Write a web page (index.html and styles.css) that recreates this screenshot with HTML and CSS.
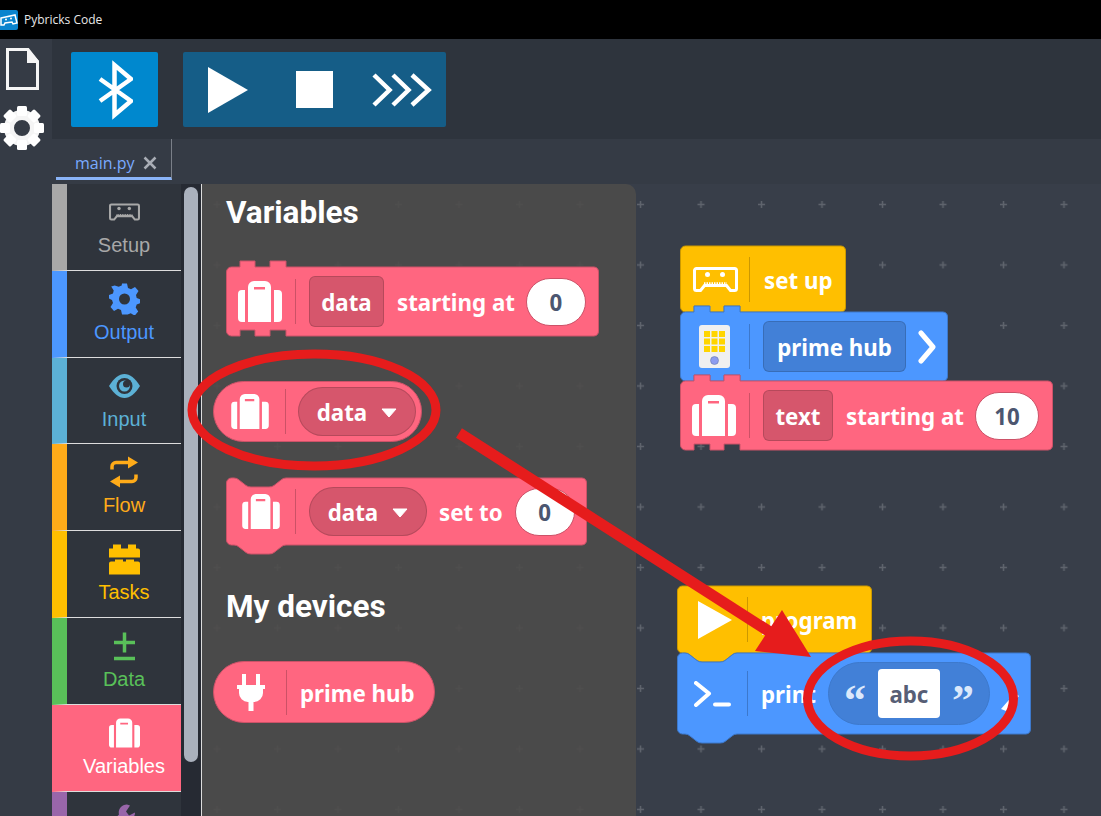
FILE: index.html
```html
<!DOCTYPE html>
<html lang="en">
<head>
    <meta charset="UTF-8">
    <title>Pybricks Code</title>
    <link rel="stylesheet" href="styles.css">
</head>
<body>
    <!-- shared icons -->
    <svg class="defs" width="0" height="0">
        <symbol id="i-case" viewBox="0 0 44 41">
            <path fill-rule="evenodd" d="M10 6a6 6 0 0 1 6-6h11a6 6 0 0 1 6 6v35H10zM16 6v2.500h11V6z"/>
            <path d="M7 9v32H4a4 4 0 0 1-4-4V13a4 4 0 0 1 4-4zM36 9h4a4 4 0 0 1 4 4v24a4 4 0 0 1-4 4h-4z"/>
        </symbol>
        <symbol id="i-setup" viewBox="0 0 45 25">
            <path d="M3.500 1.500h38a2 2 0 0 1 2 2v18a2 2 0 0 1-2 2h-4l-4-5H11.500l-4 5h-4a2 2 0 0 1-2-2v-18a2 2 0 0 1 2-2z" fill="none" stroke="currentColor" stroke-width="3"/>
            <circle cx="14.500" cy="7.500" r="2.500"/>
            <circle cx="29.500" cy="7.500" r="2.500"/>
            <path d="M11 16.500h23" stroke="currentColor" stroke-width="2.500" stroke-dasharray="1.500 1"/>
        </symbol>
        <symbol id="i-gear6" viewBox="0 0 31 31">
            <path d="M13 0h5l1 4.500 3 1.300 4-2.400 3.500 4-2.500 4 .7 3.100 4 1.500v3.500l-4 1.500-1 3.100 2.500 4-3.500 4-4-2.400-3 1.300L18 31h-5l-1-4.500-3-1.300-4 2.400-3.500-4 2.500-4-1-3.100-3-1.500V11.500l4-1.500.7-3.100-2.500-4 3.500-1 4 1.400 3-1.300z"/>
            <circle cx="15.500" cy="15.500" r="5.500" fill="#2f343c"/>
        </symbol>
        <symbol id="i-plug" viewBox="0 0 28 37">
            <path d="M5 0h4v11H5zM19 0h4v11h-4zM0 11h28v4h-2v4a9 9 0 0 1-9 9h-.500v9h-5v-9H11a9 9 0 0 1-9-9v-4H0z"/>
        </symbol>
    </svg>

    <div class="titlebar">
        <span class="app-icon">
            <svg width="18" height="20" viewBox="0 0 18 20"><path d="M1 8l14-3 2 8-4 1-1-2-7 1-1 2-3 0z" fill="none" stroke="#fff" stroke-width="1.500"/><circle cx="6" cy="9.500" r="1" fill="#fff"/><circle cx="11" cy="8.500" r="1" fill="#fff"/></svg>
        </span>
        <span class="app-title">Pybricks Code</span>
    </div>

    <div class="app">
        <div class="rail">
            <svg class="rail-doc" width="33" height="42" viewBox="0 0 33 42">
                <path d="M1.500 1.500H22L31.500 13.500V40.500H1.500z" fill="none" stroke="#f5f5f5" stroke-width="3"/>
                <path d="M21 0L33 13v2H21z" fill="#f5f5f5"/>
            </svg>
            <svg class="rail-gear" width="44" height="44" viewBox="-22 -22 44 44" fill="#f5f5f5">
                <circle r="13" fill="none" stroke="#f5f5f5" stroke-width="10"/>
                <rect x="-5" y="-22" width="10" height="10" rx="1.500"/>
                <rect x="-5" y="-22" width="10" height="10" rx="1.500" transform="rotate(45)"/>
                <rect x="-5" y="-22" width="10" height="10" rx="1.500" transform="rotate(90)"/>
                <rect x="-5" y="-22" width="10" height="10" rx="1.500" transform="rotate(135)"/>
                <rect x="-5" y="-22" width="10" height="10" rx="1.500" transform="rotate(180)"/>
                <rect x="-5" y="-22" width="10" height="10" rx="1.500" transform="rotate(225)"/>
                <rect x="-5" y="-22" width="10" height="10" rx="1.500" transform="rotate(270)"/>
                <rect x="-5" y="-22" width="10" height="10" rx="1.500" transform="rotate(315)"/>
            </svg>
        </div>

        <div class="content">
            <div class="toolbar">
                <div class="btn-bluetooth">
                    <svg width="36" height="60" viewBox="0 0 36 60"><path d="M3 19L34 41 17.500 55V5L34 19 3 41" fill="none" stroke="#fff" stroke-width="4.500"/></svg>
                </div>
                <div class="btn-group">
                    <svg width="40" height="46" viewBox="0 0 40 46"><path d="M0 0L40 23 0 46z" fill="#fff"/></svg>
                    <div class="stop"></div>
                    <svg width="60" height="34" viewBox="0 0 60 34"><path d="M2 2L17.500 17 2 32M21 2L36.500 17 21 32M40 2L56.500 17 40 32" fill="none" stroke="#fff" stroke-width="4.500"/></svg>
                </div>
            </div>

            <div class="tabs">
                <div class="tab">
                    <span>main.py</span>
                    <svg width="14" height="14" viewBox="0 0 14 14"><path d="M1.500 1.500l11 11M12.500 1.500l-11 11" stroke="#a9adb5" stroke-width="2.500"/></svg>
                </div>
            </div>

            <div class="editor">
                <div class="toolbox">
                    <div class="cat cat-setup">
                        <svg class="cat-icon" width="31" height="18"><use href="#i-setup"/></svg>
                        <span>Setup</span>
                    </div>
                    <div class="cat cat-output">
                        <svg class="cat-icon" width="31" height="31"><use href="#i-gear6"/></svg>
                        <span>Output</span>
                    </div>
                    <div class="cat cat-input">
                        <svg class="cat-icon" width="31" height="24" viewBox="0 0 31 24">
                            <path d="M0 12C5 4 10 0 15.500 0S26 4 31 12c-5 8-10 12-15.500 12S5 20 0 12z"/>
                            <circle cx="15.500" cy="12" r="8" fill="#2f343c"/>
                            <circle cx="15.500" cy="12" r="5.500"/>
                            <circle cx="17.500" cy="10" r="3.500" fill="#2f343c"/>
                        </svg>
                        <span>Input</span>
                    </div>
                    <div class="cat cat-flow">
                        <svg class="cat-icon" width="28" height="31" viewBox="0 0 28 31">
                            <path d="M2 13V10a4 4 0 0 1 4-4h14M26 18v3a4 4 0 0 1-4 4H8" fill="none" stroke="currentColor" stroke-width="3.500"/>
                            <path d="M18 0l10 6-10 6zM10 19L0 25l10 6z"/>
                        </svg>
                        <span>Flow</span>
                    </div>
                    <div class="cat cat-tasks">
                        <svg class="cat-icon" width="31" height="31" viewBox="0 0 31 31">
                            <path d="M0 5h4V1h8v4h7V1h8v4h2a2 2 0 0 1 2 2v7H0zM0 20a2 2 0 0 1 2-2h4v-2h8v2h3v-2h8v2h4a2 2 0 0 1 2 2v11H0z"/>
                        </svg>
                        <span>Tasks</span>
                    </div>
                    <div class="cat cat-data">
                        <svg class="cat-icon" width="21" height="29" viewBox="0 0 21 29">
                            <path d="M0 11h21M10.500 1v20M0 27h21" stroke="currentColor" stroke-width="3.500"/>
                        </svg>
                        <span>Data</span>
                    </div>
                    <div class="cat cat-vars">
                        <svg class="cat-icon" width="31" height="30"><use href="#i-case"/></svg>
                        <span>Variables</span>
                    </div>
                    <div class="cat cat-funcs">
                        <svg class="cat-icon" width="22" height="31" viewBox="0 0 22 31">
                            <path d="M14 0a8 8 0 0 0-8 10l-6 6 6 8 7-8a8 8 0 0 0 9-8l-6 3-3-4 4-6z"/>
                        </svg>
                    </div>
                </div>

                <div class="scrollbar"><div class="thumb"></div></div>

                <div class="workspace">
                    <svg class="grid" width="100%" height="100%">
                        <defs>
                            <pattern id="plus" x="10.500" y="17" width="60.500" height="60.500" patternUnits="userSpaceOnUse">
                                <path d="M1 3.500h7M4.500 0v7" stroke="#5f646d" stroke-width="1.500"/>
                            </pattern>
                        </defs>
                        <rect width="100%" height="100%" fill="url(#plus)"/>
                    </svg>

                    <div class="flyout">
                        <h2 class="fly-title">Variables</h2>

                        <div class="block red var-init">
                            <svg class="shape" width="373" height="69"><path d="M.5 5a5 5 0 0 1 5-5H14V-6H29V0H44V-6H60V0H368a5 5 0 0 1 4.500 5V64a5 5 0 0 1-4.500 5H60V63H44V69H29V63H14V69H5.500a5 5 0 0 1-5-5z"/></svg>
                            <svg class="icon" width="44" height="41"><use href="#i-case"/></svg>
                            <div class="sep"></div>
                            <div class="field field-square w-data">data</div>
                            <span class="label">starting at</span>
                            <div class="num">0</div>
                        </div>

                        <div class="block red pill var-get">
                            <svg class="icon" width="38" height="35"><use href="#i-case"/></svg>
                            <div class="sep"></div>
                            <div class="field field-pill">data<svg class="tri" width="16" height="10" viewBox="0 0 16 10"><path d="M1 1h14L8 9z" fill="#fff" stroke="#fff" stroke-linejoin="round"/></svg></div>
                        </div>

                        <div class="block red var-set">
                            <svg class="shape" width="361" height="67"><path d="M.5 5a5 5 0 0 1 5-5H8Q11 0 13 2L20 7.500Q22 9 25 9H43Q46 9 48 7.500L55 2Q57 0 60 0H356a5 5 0 0 1 4.500 5V62a5 5 0 0 1-4.500 5H60Q57 67 55 69L48 74.500Q46 76 43 76H25Q22 76 20 74.500L13 69Q11 67 8 67H5.500a5 5 0 0 1-5-5z"/></svg>
                            <svg class="icon" width="38" height="35"><use href="#i-case"/></svg>
                            <div class="sep"></div>
                            <div class="field field-pill">data<svg class="tri" width="16" height="10" viewBox="0 0 16 10"><path d="M1 1h14L8 9z" fill="#fff" stroke="#fff" stroke-linejoin="round"/></svg></div>
                            <span class="label">set to</span>
                            <div class="num">0</div>
                        </div>

                        <h2 class="fly-title devices">My devices</h2>

                        <div class="block red pill dev-hub">
                            <svg class="icon" width="28" height="37"><use href="#i-plug"/></svg>
                            <div class="sep"></div>
                            <span class="label">prime hub</span>
                        </div>
                    </div>

                    <!-- blocos soltos no canvas -->
                    <div class="stack stack-setup">
                        <div class="block yellow b-setup">
                            <svg class="shape" width="166" height="66"><path d="M.5 5a5 5 0 0 1 5-5H161a5 5 0 0 1 4.500 5V61a5 5 0 0 1-4.500 5H60V60H44V66H29V60H14V66H5.500a5 5 0 0 1-5-5z"/></svg>
                            <svg class="icon" width="45" height="25"><use href="#i-setup"/></svg>
                            <div class="sep"></div>
                            <span class="label">set up</span>
                        </div>
                        <div class="block blue b-hub">
                            <svg class="shape" width="268" height="69"><path d="M.5 5a5 5 0 0 1 5-5H14V-6H30V0H44V-6H60V0H263a5 5 0 0 1 4.500 5V64a5 5 0 0 1-4.500 5H60V63H44V69H30V63H14V69H5.500a5 5 0 0 1-5-5z"/></svg>
                            <svg class="icon" width="31" height="43" viewBox="0 0 31 43">
                                <rect width="31" height="43" rx="3" fill="#f0f0f0"/>
                                <path d="M5 6h6v6H5zM12.500 6h6v6h-6zM20 6h6v6h-6zM5 13.500h6v6H5zM12.500 13.500h6v6h-6zM20 13.500h6v6h-6zM5 21h6v6H5zM12.500 21h6v6h-6zM20 21h6v6h-6z" fill="#ffd500"/>
                                <circle cx="15.500" cy="35.500" r="4" fill="#8c9cf0" stroke="#5f6fa0" stroke-width=".5"/>
                            </svg>
                            <div class="sep"></div>
                            <div class="field field-square w-hub">prime hub</div>
                            <svg class="chevron" width="18" height="34" viewBox="0 0 18 34"><path d="M3 3l12 14L3 31" fill="none" stroke="#fff" stroke-width="5" stroke-linecap="round" stroke-linejoin="round"/></svg>
                        </div>
                        <div class="block red b-text">
                            <svg class="shape" width="373" height="69"><path d="M.5 5a5 5 0 0 1 5-5H14V-6H30V0H44V-6H60V0H368a5 5 0 0 1 4.500 5V64a5 5 0 0 1-4.500 5H60V63H44V69H30V63H14V69H5.500a5 5 0 0 1-5-5z"/></svg>
                            <svg class="icon" width="44" height="41"><use href="#i-case"/></svg>
                            <div class="sep"></div>
                            <div class="field field-square w-text">text</div>
                            <span class="label">starting at</span>
                            <div class="num num-wide">10</div>
                        </div>
                    </div>

                    <div class="stack stack-program">
                        <div class="block yellow b-program">
                            <svg class="shape" width="195" height="67"><path d="M.5 5a5 5 0 0 1 5-5H190a5 5 0 0 1 4.500 5V62a5 5 0 0 1-4.500 5H60Q57 67 55 69L48 74.500Q46 76 43 76H25Q22 76 20 74.500L13 69Q11 67 8 67H5.500a5 5 0 0 1-5-5z"/></svg>
                            <svg class="icon" width="34" height="38" viewBox="0 0 34 38"><path d="M0 0L34 19 0 38z" fill="#fff"/></svg>
                            <div class="sep"></div>
                            <span class="label">program</span>
                        </div>
                        <div class="block blue b-print">
                            <svg class="shape" width="354" height="81"><path d="M.5 5a5 5 0 0 1 5-5H8Q11 0 13 2L20 7.500Q22 9 25 9H43Q46 9 48 7.500L55 2Q57 0 60 0H349a5 5 0 0 1 4.500 5V76a5 5 0 0 1-4.500 5H60Q57 81 55 83L48 88.500Q46 90 43 90H25Q22 90 20 88.500L13 83Q11 81 8 81H5.500a5 5 0 0 1-5-5z"/></svg>
                            <svg class="icon" width="37" height="26" viewBox="0 0 37 26"><path d="M2 2l13 10.500L2 24M21 23.500h14" fill="none" stroke="#fff" stroke-width="4" stroke-linecap="round" stroke-linejoin="round"/></svg>
                            <div class="sep"></div>
                            <span class="label">print</span>
                            <div class="text-pill">
                                <span class="quote">“</span>
                                <div class="text-value">abc</div>
                                <span class="quote">”</span>
                            </div>
                            <svg class="pencil" width="18" height="20" viewBox="0 0 18 20"><path d="M0 18L14 2l4 3L5 20z" fill="#fff"/></svg>
                        </div>
                    </div>
                </div>
            </div>
        </div>
    </div>

    <!-- marcas vermelhas por cima de tudo -->
    <svg class="marks" width="1101" height="816" viewBox="0 0 1101 816">
        <ellipse cx="314" cy="410" rx="122" ry="56" fill="none" stroke="#e61c1c" stroke-width="9"/>
        <ellipse cx="910.500" cy="698.500" rx="103" ry="57.500" fill="none" stroke="#e61c1c" stroke-width="9"/>
        <path d="M459 433L770 632" stroke="#e61c1c" stroke-width="11"/>
        <path d="M782 610L755 651 811 657z" fill="#e61c1c"/>
    </svg>
</body>
</html>
```

FILE: styles.css
```css
html, body {
    margin: 0;
    padding: 0;
    height: 100%;
    overflow: hidden;
}
body {
    position: relative;
    background-color: #353b45;
    font-family: "Liberation Sans", Arial, sans-serif;
    color: #fff;
}
.defs {
    position: absolute;
}
svg {
    display: block;
    flex: none;
    fill: currentColor;
}

/* barra de titulo */
.titlebar {
    height: 39px;
    background-color: #000;
    display: flex;
    align-items: center;
    gap: 6px;
}
.app-icon {
    width: 18px;
    height: 20px;
    background-color: #0a84ce;
    border-radius: 0 2px 2px 0;
}
.app-title {
    font-family: "Open Sans", sans-serif;
    font-size: 12px;
    color: #e8e8e8;
}

.app {
    display: flex;
    height: 777px;
}
.rail {
    width: 52px;
    flex: none;
    background-color: #353b45;
    display: flex;
    flex-direction: column;
}
.rail-doc {
    margin: 9px 0 0 6px;
}
.rail-gear {
    margin: 16px 0 0 0;
}
.content {
    flex: 1;
    display: flex;
    flex-direction: column;
    min-width: 0;
}

/* toolbar */
.toolbar {
    height: 100px;
    flex: none;
    box-sizing: border-box;
    padding: 13px 0 0 19px;
    background-color: #2e343d;
    display: flex;
    gap: 25px;
}
.btn-bluetooth {
    width: 87px;
    height: 75px;
    background-color: #0088ce;
    border-radius: 2px;
    display: flex;
    align-items: center;
    justify-content: center;
}
.btn-group {
    width: 263px;
    height: 75px;
    box-sizing: border-box;
    padding-left: 25px;
    background-color: #155d87;
    border-radius: 2px;
    display: flex;
    align-items: center;
    gap: 48px;
}
.btn-group svg:last-child {
    margin-left: -9px;
}
.stop {
    width: 37px;
    height: 37px;
    background-color: #fff;
}

/* abas */
.tabs {
    height: 45px;
    flex: none;
    box-sizing: border-box;
    padding: 0 0 0 4px;
    background-color: #353b45;
}
.tab {
    width: 116px;
    height: 41px;
    box-sizing: border-box;
    padding: 9px 0 0 19px;
    border-bottom: 3px solid #8ab4f8;
    border-right: 1px solid #7a7f88;
    display: flex;
    align-items: center;
    gap: 8px;
    font-family: "Open Sans", sans-serif;
    font-size: 16px;
    color: #7aaaff;
}

.editor {
    flex: 1;
    display: flex;
    min-height: 0;
}

/* toolbox */
.toolbox {
    width: 129px;
    flex: none;
    background-color: #2f343c;
    overflow: hidden;
}
.cat {
    height: 86.800px;
    box-sizing: border-box;
    padding-top: 12px;
    border-left: 15px solid currentColor;
    border-bottom: 1px solid #ddd;
    display: flex;
    flex-direction: column;
    align-items: center;
    font-size: 20px;
    line-height: 24px;
}
.cat-icon {
    height: 32px;
    margin-bottom: 5px;
}
.cat-setup .cat-icon {
    margin-top: 7px;
    height: 18px;
    margin-bottom: 12px;
}
.cat-setup { color: #a8a8a8; }
.cat-output { color: #4c97ff; }
.cat-input { color: #5cb1d6; }
.cat-flow { color: #ffab19; }
.cat-tasks { color: #ffbf00; }
.cat-data { color: #59c059; }
.cat-vars {
    color: #fff;
    border-left-color: #ff6680;
    background-color: #ff6680;
}
.cat-funcs { color: #9966aa; }

.scrollbar {
    width: 21px;
    flex: none;
    box-sizing: border-box;
    padding: 3px 3px 0;
    background-color: #262a33;
    border-right: 1px solid #ddd;
}
.thumb {
    width: 14px;
    height: 575px;
    background-color: #aab1bd;
    border-radius: 7px;
}

/* area dos blocos */
.workspace {
    flex: 1;
    position: relative;
    background-color: #383e49;
    overflow: hidden;
}
.grid {
    position: absolute;
    top: 0;
    left: 0;
}
.flyout {
    position: relative;
    width: 434px;
    height: 100%;
    box-sizing: border-box;
    padding: 14px 0 0 11px;
    background-color: rgba(76, 75, 74, 0.9);
    border-radius: 0 10px 0 0;
    display: flex;
    flex-direction: column;
    align-items: flex-start;
}
.fly-title {
    margin: 0 0 0 13px;
    font-family: Roboto, sans-serif;
    font-size: 31.500px;
    font-weight: 700;
    line-height: 30px;
}
.devices {
    margin-top: 47px;
}

/* blocos */
.block {
    position: relative;
    display: flex;
    align-items: center;
    gap: 13px;
    box-sizing: border-box;
    font-family: "Noto Sans", sans-serif;
    font-size: 22.300px;
    font-weight: 700;
    line-height: 30px;
    color: #fff;
}
.shape {
    position: absolute;
    top: 0;
    left: 0;
    overflow: visible;
    stroke-width: 1;
}
.block > * {
    position: relative;
}
.block > .shape {
    position: absolute;
}
.red .shape { fill: #ff6680; stroke: #cc5268; }
.blue .shape { fill: #4c97ff; stroke: #3d79cc; }
.yellow .shape { fill: #ffbf00; stroke: #cc9900; }

.sep {
    width: 1px;
    height: 45px;
    flex: none;
    background-color: rgba(0, 0, 0, 0.2);
}
.field {
    box-sizing: border-box;
    height: 51px;
    padding-top: 3px;
    flex: none;
    display: flex;
    align-items: center;
    justify-content: center;
    border: 1px solid rgba(0, 0, 0, 0.15);
}
.red .field { background-color: #d6566c; }
.blue .field { background-color: #4280d7; }
.field-square {
    border-radius: 6px;
}
.field-pill {
    width: 118px;
    height: 49px;
    gap: 14px;
    border-radius: 25px;
}
.w-data { width: 75px; }
.w-text { width: 70px; }
.w-hub { width: 143px; }
.label {
    flex: none;
    padding-top: 3px;
    white-space: nowrap;
}
.num {
    box-sizing: border-box;
    width: 60px;
    height: 48px;
    padding-top: 3px;
    flex: none;
    display: flex;
    align-items: center;
    justify-content: center;
    background-color: #fff;
    border: 1px solid #cc5268;
    border-radius: 24px;
    color: #4c5670;
}
.num-wide {
    width: 64px;
}
.pill {
    border: 1px solid #cc5268;
    background-color: #ff6680;
    border-radius: 31px;
}

.var-init {
    width: 373px;
    height: 69px;
    margin: 39px 0 0 13px;
    padding-left: 12px;
}
.var-init .num { margin-left: -2px; }
.var-get {
    width: 209px;
    height: 61px;
    margin: 45px 0 0 0;
    padding-left: 17px;
}
.var-get .icon { margin-right: 3px; }
.var-get .sep { margin-right: -1px; }
.var-set {
    width: 361px;
    height: 67px;
    margin: 36px 0 0 13px;
    padding-left: 16px;
}
.var-set .icon { margin-right: 2px; }
.var-set .label { margin-left: -1px; }
.var-set .num { margin-left: -1px; }
.dev-hub {
    width: 222px;
    height: 62px;
    margin-top: 39px;
    padding-left: 23px;
}
.dev-hub .icon { margin-right: 8px; }

/* pilhas no canvas */
.stack {
    position: absolute;
}
.stack-setup {
    left: 478px;
    top: 62px;
}
.stack-program {
    left: 475px;
    top: 402px;
}
.b-setup {
    width: 166px;
    height: 66px;
    padding-left: 13px;
}
.b-setup .icon { margin-right: -2px; }
.b-setup .label { margin: 1px 0 0 1px; }
.b-hub {
    width: 268px;
    height: 69px;
    padding-left: 19px;
}
.b-hub .icon { margin-right: 6px; }
.chevron { margin-left: -1px; }
.b-text {
    width: 373px;
    height: 69px;
    padding-left: 12px;
}
.b-text .num { margin-left: -2px; }
.b-program {
    width: 195px;
    height: 67px;
    padding-left: 21px;
}
.b-program .icon { margin-right: 2px; }
.b-print {
    width: 354px;
    height: 81px;
    padding-left: 17px;
}
.b-print .icon { margin-right: 3px; }
.text-pill {
    box-sizing: border-box;
    width: 162px;
    height: 63px;
    flex: none;
    margin-left: -1px;
    display: flex;
    align-items: center;
    justify-content: center;
    gap: 12px;
    background-color: #4280d7;
    border: 1px solid #3d79cc;
    border-radius: 32px;
}
.quote {
    font-family: "Liberation Serif", serif;
    font-size: 44px;
    line-height: 44px;
    height: 30px;
    color: #dbe8fb;
}
.text-value {
    box-sizing: border-box;
    width: 62px;
    height: 49px;
    padding-top: 3px;
    display: flex;
    align-items: center;
    justify-content: center;
    background-color: #fff;
    border-radius: 4px;
    color: #575e75;
}
.pencil {
    margin-left: -2px;
    margin-top: 14px;
}

.marks {
    position: absolute;
    top: 0;
    left: 0;
    pointer-events: none;
}
```
